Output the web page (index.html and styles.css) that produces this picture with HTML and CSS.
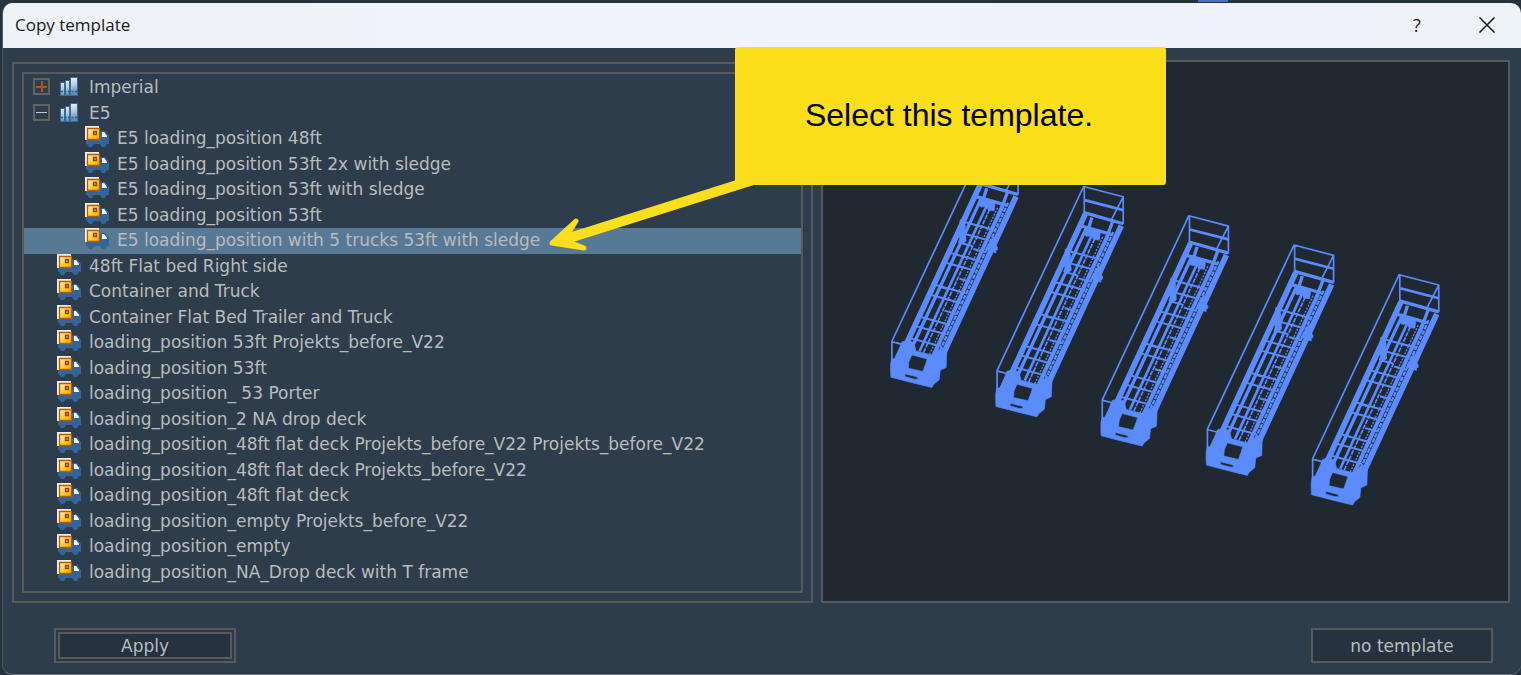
FILE: index.html
```
<!DOCTYPE html>
<html lang="en">
<head>
<meta charset="utf-8">
<title>Copy template</title>
<link rel="stylesheet" href="styles.css">
</head>
<body>
<svg class="defs" aria-hidden="true">
  <defs>
    <linearGradient id="steel" x1="0" y1="0" x2="0.3" y2="1"><stop offset="0" stop-color="#fff"/><stop offset="0.6" stop-color="#b4cde0"/><stop offset="1" stop-color="#5d8fb9"/></linearGradient>
    <linearGradient id="gold" x1="0" y1="0" x2="1" y2="1"><stop offset="0" stop-color="#fff0b8"/><stop offset="0.6" stop-color="#ffc928"/><stop offset="1" stop-color="#f5a300"/></linearGradient>
    <symbol id="load" viewBox="0 0 24 22">
      <path fill="#33649a" d="M1 14H15V7q0-2 2-2h3l4 5v8h-2l-2 3h-3l-2-3H9l-2 3H4l-2-3H1z"/>
      <path fill="#fff" d="M17 6h2l3 4v1h-5z"/>
      <path fill="#f4eee6" d="M0 0h14v2H2v12H0z"/>
      <path fill="url(#gold)" stroke="#b35a0a" stroke-width="1.3" d="M2.500 2.500h12v11h-12z"/>
      <path fill="#e6a43a" stroke="#8f470c" stroke-width="1.300" d="M8.500 5.500h3v3h-3z"/>
    </symbol>
    <symbol id="bars" viewBox="0 0 18 19">
      <path fill="#356b9c" d="M0 5h5V3h5V0h8v19H0z"/>
      <path fill="url(#steel)" d="M1 6h3v12H1zM6 4h3v14H6zM11 1h6v17h-6z"/>
      <path stroke="#2c5d8c" stroke-width="1.300" stroke-dasharray="2 1.500" d="M1 14.500h16"/>
    </symbol>
    <g id="truck" fill="none" stroke="#5a8cff" stroke-linejoin="round">
      <path stroke-width="5" d="M67 690V600L327 47 446 78V160M329 47V125M66 601l50 13M446 78L408 152"/>
      <path stroke-width="8" d="M330 88L446 118"/>
      <path stroke-width="17" d="M82 670L332 130M216 650L440 165"/>
      <path stroke-width="10" d="M326 125l120 34M318 165l92 26M352 140l-10 32M415 150l-26 70M122 630L336 170"/>
      <path stroke-width="8" d="M150 630L352 192"/>
      <path stroke-width="12" d="M193 640L399 195"/>
      <path stroke-width="5" stroke-dasharray="14 3" d="M162 634L366 192"/>
      <path stroke-width="4" stroke-dasharray="6 4" d="M180 640L386 195"/>
      <path stroke-width="7" stroke-dasharray="14 3" d="M204 644L416 184"/>
      <path stroke-width="6" d="M279 240l96 26M264 272l94 25M236 333l96 26M221 362l96 26M190 429l96 26M177 459l96 26M146 525l96 26M133 553l96 26M116 589l100 27"/>
      <path stroke-width="6" d="M312 323l34 9M270 412l32 9M225 508l36 10M274 305l34 9M212 437l20 5"/>
      <g fill="#5a8cff" stroke-width="2">
        <path fill-rule="evenodd" d="M63 670l3-16 9-2 14-30 8-20 16-4 20 6 6 25 46 12 18-16 12 4 4-8 13 2-2 56-18 8-3 29-17 14-5 9-65-16-58-15-1-15zM127 641l46 12-4 14-9 24-44-10 2-20zM106 698l36 9 5 7-13 0-28-8z"/>
        <path d="M272 235h10l6 20-4 18 4 6 2 20-12 9-11-5 4-12-8-12 6-10zM372 285l6 26 6 6v8l-5 2v8l-30-12zM335 176l34 2 8 10-3 20-18-2-4-12-16 3-8-8z"/>
      </g>
    </g>
  </defs>
</svg>
<main class="window">
  <header class="titlebar">
    <h1>Copy template</h1>
    <button class="help" aria-label="Help">?</button>
    <button class="close" aria-label="Close"><svg viewBox="0 0 16 16"><path d="M.5.500l15 15M15.500.500l-15 15"/></svg></button>
  </header>
  <div class="content">
    <section class="panel">
      <ul class="tree">
        <li><div class="row group"><button class="toggle plus" aria-label="Expand Imperial"></button><svg class="bars"><use href="#bars"/></svg>Imperial</div></li>
        <li><div class="row group"><button class="toggle" aria-label="Collapse E5"></button><svg class="bars"><use href="#bars"/></svg>E5</div>
          <ul class="children">
            <li class="row"><svg class="load"><use href="#load"/></svg>E5 loading_position 48ft</li>
            <li class="row"><svg class="load"><use href="#load"/></svg>E5 loading_position 53ft 2x with sledge</li>
            <li class="row"><svg class="load"><use href="#load"/></svg>E5 loading_position 53ft with sledge</li>
            <li class="row"><svg class="load"><use href="#load"/></svg>E5 loading_position 53ft</li>
            <li class="row selected"><svg class="load"><use href="#load"/></svg>E5 loading_position with 5 trucks 53ft with sledge</li>
          </ul>
        </li>
        <li class="row"><svg class="load"><use href="#load"/></svg>48ft Flat bed Right side</li>
        <li class="row"><svg class="load"><use href="#load"/></svg>Container and Truck</li>
        <li class="row"><svg class="load"><use href="#load"/></svg>Container Flat Bed Trailer and Truck</li>
        <li class="row"><svg class="load"><use href="#load"/></svg>loading_position 53ft Projekts_before_V22</li>
        <li class="row"><svg class="load"><use href="#load"/></svg>loading_position 53ft</li>
        <li class="row"><svg class="load"><use href="#load"/></svg>loading_position_ 53 Porter</li>
        <li class="row"><svg class="load"><use href="#load"/></svg>loading_position_2 NA drop deck</li>
        <li class="row"><svg class="load"><use href="#load"/></svg>loading_position_48ft flat deck Projekts_before_V22 Projekts_before_V22</li>
        <li class="row"><svg class="load"><use href="#load"/></svg>loading_position_48ft flat deck Projekts_before_V22</li>
        <li class="row"><svg class="load"><use href="#load"/></svg>loading_position_48ft flat deck</li>
        <li class="row"><svg class="load"><use href="#load"/></svg>loading_position_empty Projekts_before_V22</li>
        <li class="row"><svg class="load"><use href="#load"/></svg>loading_position_empty</li>
        <li class="row"><svg class="load"><use href="#load"/></svg>loading_position_NA_Drop deck with T frame</li>
      </ul>
    </section>
    <section class="preview" aria-label="Template preview">
      <svg viewBox="0 0 2058 1620">
        <use href="#truck" x="140" y="239"/>
        <use href="#truck" x="456" y="327"/>
        <use href="#truck" x="772" y="415"/>
        <use href="#truck" x="1088" y="503"/>
        <use href="#truck" x="1404" y="592"/>
      </svg>
    </section>
  </div>
  <footer class="actions">
    <button class="action default"><span>Apply</span></button>
    <button class="action">no template</button>
  </footer>
</main>
<svg class="arrow" viewBox="0 0 210 76" aria-hidden="true"><path class="shaft" d="M18 69L205 10"/><path class="head" d="M28 51L4 73 36 78 18 71V67z"/></svg>
<aside class="callout">Select this template.</aside>
</body>
</html>
```
FILE: styles.css
```
* { box-sizing: border-box; }
body {
  margin: 0;
  padding: 3px 0 0 2px;
  min-height: 100vh;
  display: flex;
  background: linear-gradient(90deg, transparent 1198px, #4a6fc4 1198px 1228px, transparent 1228px) 0 0 / 100% 2px no-repeat, #26323c;
  color: #b9bcbd;
  font: 17px/1.5 "DejaVu Sans", sans-serif;
  overflow: hidden;
}
button { font: inherit; color: inherit; padding: 0; border: 0; background: none; }
ul { list-style: none; margin: 0; padding: 0; }
.defs { position: absolute; width: 0; height: 0; }
.window {
  flex: 1;
  min-width: 0;
  display: flex;
  flex-direction: column;
  background: #2e3d4b;
  border-left: 1px solid #4d5961;
  border-bottom: 1px solid #68737b;
  border-radius: 10px;
  overflow: hidden;
}
.titlebar {
  display: flex;
  align-items: center;
  height: 45px;
  padding: 0 26px 2px 12px;
  background: linear-gradient(90deg, #eff3f8, #f0f3fa 50%, #eff2fb 75%, #eef3f7);
  color: #1a1a1a;
}
.titlebar h1 { margin: 0 auto 0 0; font: 17px/24px "Open Sans", sans-serif; }
.help { width: 16px; margin-right: 54px; font: 18px/24px "Open Sans", sans-serif; }
.close { width: 16px; height: 16px; display: flex; }
.close svg { width: 16px; height: 16px; fill: none; stroke: #111; stroke-width: 1.500; }
.content {
  flex: 1;
  display: grid;
  grid-template-columns: 801fr 689fr;
  gap: 8px;
  padding: 12px 11px 0 9px;
}
.panel { margin-top: 2px; padding: 8px; border: 2px solid #565a5c; }
.tree { height: 100%; padding-top: 1px; border: 2px solid #565a5c; }
.row { display: flex; align-items: center; gap: 8px; padding-left: 33px; white-space: nowrap; }
.group { gap: 10px; padding-left: 9px; }
.children .row { padding-left: 61px; }
.children .selected { background: #587994; }
.load { width: 24px; height: 22px; margin-bottom: 3px; }
.bars { width: 18px; height: 19px; margin: 0 1px 2px 0; }
.toggle {
  width: 17px;
  height: 17px;
  margin-bottom: 2px;
  border: 2px solid #62625f;
  background: linear-gradient(#c3c6c8, #c3c6c8) center / 11px 1px no-repeat;
}
.plus { background: linear-gradient(#b5501a, #b5501a) center / 11px 2px no-repeat, linear-gradient(#b5501a, #b5501a) center / 2px 11px no-repeat; }
.preview { display: flex; border: 2px solid #565a5c; background: #202931; }
.preview svg { width: 100%; height: 100%; }
.actions { display: flex; justify-content: space-between; padding: 25px 28px 11px 51px; }
.action {
  width: 182px;
  height: 35px;
  padding-top: 2px;
  border: 2px solid #565a5c;
  background: #26333f;
}
.default { padding: 2px; background: #2b3945; }
.default span { display: block; padding-top: 2px; border: 2px solid #565a5c; background: #26333f; line-height: 21px; }
.callout {
  position: absolute;
  left: 735px;
  top: 47px;
  width: 431px;
  height: 138px;
  padding: 0 3px 2px 0;
  display: flex;
  align-items: center;
  justify-content: center;
  border-radius: 3px;
  background: #fbdf1b;
  color: #000;
  font: 32px/36px "Liberation Sans", Arial, sans-serif;
}
.arrow { position: absolute; left: 548px; top: 170px; width: 210px; height: 76px; overflow: visible; fill: none; stroke: #fbdf1b; }
.shaft { stroke-width: 10; }
.head { stroke-width: 5; stroke-linejoin: round; fill: #fbdf1b; }
```
